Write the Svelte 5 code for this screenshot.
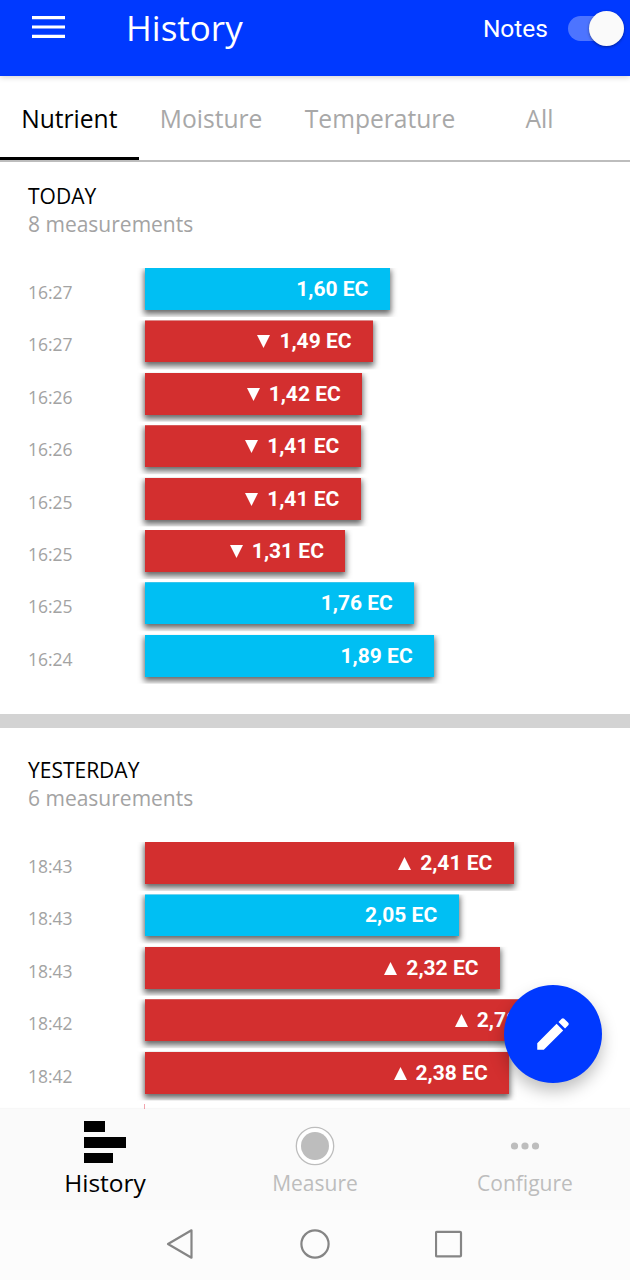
<script lang="ts">
	type Level = 'ok' | 'low' | 'high';

	interface Measurement {
		time: string;
		ec: number;
		level: Level;
	}

	interface Day {
		title: string;
		total: number;
		items: Measurement[];
	}

	const tabs = ['Nutrient', 'Moisture', 'Temperature', 'All'];

	// Bar width in pixels for 1 EC
	const scale = 153;

	const days: Day[] = [
		{
			title: 'TODAY',
			total: 8,
			items: [
				{ time: '16:27', ec: 1.6, level: 'ok' },
				{ time: '16:27', ec: 1.49, level: 'low' },
				{ time: '16:26', ec: 1.42, level: 'low' },
				{ time: '16:26', ec: 1.41, level: 'low' },
				{ time: '16:25', ec: 1.41, level: 'low' },
				{ time: '16:25', ec: 1.31, level: 'low' },
				{ time: '16:25', ec: 1.76, level: 'ok' },
				{ time: '16:24', ec: 1.89, level: 'ok' }
			]
		},
		{
			title: 'YESTERDAY',
			total: 6,
			items: [
				{ time: '18:43', ec: 2.41, level: 'high' },
				{ time: '18:43', ec: 2.05, level: 'ok' },
				{ time: '18:43', ec: 2.32, level: 'high' },
				{ time: '18:42', ec: 2.78, level: 'high' },
				{ time: '18:42', ec: 2.38, level: 'high' }
			]
		}
	];

	let activeTab = $state('Nutrient');
	let notes = $state(true);

	function format(ec: number) {
		return ec.toFixed(2).replace('.', ',') + ' EC';
	}
</script>

<div class="screen">
	<header>
		<button class="menu" aria-label="Menu">
			<svg width="33" height="23" viewBox="0 0 33 23">
				<path d="M0 1.6h33M0 11h33M0 20.4h33" stroke="#fff" stroke-width="3.2" />
			</svg>
		</button>
		<h1>History</h1>
		<span class="notes">Notes</span>
		<button class="switch" class:on={notes} aria-label="Notes" onclick={() => (notes = !notes)}>
			<span class="thumb"></span>
		</button>
	</header>

	<nav class="tabs">
		{#each tabs as tab}
			<button class="tab" class:active={activeTab === tab} onclick={() => (activeTab = tab)}>
				{tab}
			</button>
		{/each}
	</nav>

	<main>
		{#each days as day}
			<section>
				<h2>{day.title}</h2>
				<p>{day.total} measurements</p>
				<div class="rows">
					{#each day.items as item}
						<div class="row">
							<span class="time">{item.time}</span>
							<div class="bar {item.level}" style="width: {item.ec * scale}px">
								{#if item.level !== 'ok'}
									<svg class="arrow" width="13" height="13" viewBox="0 0 13 13">
										<path d={item.level === 'low' ? 'M0 0h13L6.5 13z' : 'M0 13h13L6.5 0z'} fill="#fff" />
									</svg>
								{/if}
								<span>{format(item.ec)}</span>
							</div>
						</div>
					{/each}
					{#if day.total > day.items.length}
						<div class="next"></div>
					{/if}
				</div>
			</section>
		{/each}
	</main>

	<button class="fab" aria-label="Add note">
		<svg width="42" height="42" viewBox="0 0 24 24">
			<path
				d="M3 17.25V21h3.75L17.81 9.94l-3.75-3.75L3 17.25zM20.71 7.04a1 1 0 0 0 0-1.41l-2.34-2.34a1 1 0 0 0-1.41 0l-1.83 1.83 3.75 3.75 1.83-1.83z"
				fill="#fff"
			/>
		</svg>
	</button>

	<nav class="bottom">
		<div class="item active">
			<svg width="42" height="42" viewBox="0 0 42 42">
				<path d="M0 0h21v11H0zM0 16h42v11H0zM0 32h29v10H0z" />
			</svg>
			<span>History</span>
		</div>
		<div class="item">
			<svg width="42" height="42" viewBox="0 0 42 42">
				<circle cx="21" cy="21" r="18.7" fill="#fff" stroke="#bdbdbd" stroke-width="1.3" />
				<circle cx="21" cy="21" r="14" fill="#bdbdbd" />
			</svg>
			<span>Measure</span>
		</div>
		<div class="item">
			<svg width="42" height="42" viewBox="0 0 42 42" fill="#bdbdbd">
				<circle cx="10.5" cy="21" r="3.6" />
				<circle cx="21" cy="21" r="3.6" />
				<circle cx="31.5" cy="21" r="3.6" />
			</svg>
			<span>Configure</span>
		</div>
	</nav>

	<div class="system">
		<svg width="30" height="32" viewBox="0 0 30 32">
			<path d="M3 16 26.5 2.3v27.4z" />
		</svg>
		<svg width="32" height="32" viewBox="0 0 32 32">
			<circle cx="16" cy="16" r="13.6" />
		</svg>
		<svg width="30" height="32" viewBox="0 0 30 32">
			<rect x="1" y="3.8" width="25" height="24.6" rx="1" />
		</svg>
	</div>
</div>

<style>
	:global(body) {
		margin: 0;
	}

	.screen {
		position: relative;
		display: flex;
		flex-direction: column;
		width: 630px;
		height: 1280px;
		overflow: hidden;
		background: #fff;
		font-family: 'Open Sans', 'Noto Sans', sans-serif;
		font-weight: 370;
		color: #000;
	}

	button {
		padding: 0;
		border: 0;
		background: none;
		font: inherit;
		color: inherit;
	}

	header {
		position: relative;
		display: flex;
		flex: none;
		align-items: center;
		box-sizing: border-box;
		height: 76px;
		padding: 0 6px 20px 32px;
		background: #0039ff;
		color: #fff;
		box-shadow: 0 1px 6px rgba(0, 0, 0, 0.2);
	}

	.menu {
		display: flex;
		margin: 0 61px 1px 0;
	}

	h1 {
		flex: 1;
		margin: 0;
		font-size: 35px;
		font-weight: inherit;
		line-height: 56px;
	}

	.notes {
		margin-right: 20px;
		font-family: Roboto, sans-serif;
		font-size: 24.5px;
		font-weight: 400;
	}

	.switch {
		display: flex;
		align-items: center;
		width: 56px;
		height: 25px;
		border-radius: 13px;
		background: rgba(255, 255, 255, 0.3);
	}

	.switch.on {
		justify-content: flex-end;
	}

	.thumb {
		width: 35px;
		height: 35px;
		border-radius: 50%;
		background: #fafafa;
		box-shadow: 0 1px 3px rgba(0, 0, 0, 0.4);
	}

	.tabs {
		display: flex;
		flex: none;
		box-sizing: border-box;
		height: 86px;
		border-bottom: 2px solid #bdbdbd;
	}

	.tab {
		box-sizing: border-box;
		min-width: 126px;
		height: 84px;
		padding: 3px 21.2px 0;
		border-bottom: 3px solid transparent;
		font-size: 24.6px;
		color: #a8a8a8;
	}

	.tab.active {
		border-color: #000;
		color: #000;
	}

	main {
		flex: 1;
		min-height: 0;
		overflow: hidden;
	}

	section {
		box-sizing: border-box;
		height: 566px;
		padding: 28px 28px 0;
	}

	section:first-child {
		padding-top: 20px;
		border-bottom: 14px solid #d3d3d3;
	}

	h2 {
		margin: 0;
		font-size: 21px;
		font-weight: inherit;
		line-height: 28px;
	}

	p {
		margin: 0;
		font-size: 21px;
		line-height: 28px;
		color: #a3a3a3;
	}

	.rows {
		padding-top: 30px;
	}

	.row {
		display: flex;
		align-items: flex-start;
		height: 52.4px;
	}

	.time {
		width: 117px;
		padding-top: 3px;
		font-size: 17.5px;
		line-height: 43px;
		color: #a3a3a3;
	}

	/* The shadow is cut off at the cell's own edges */
	.bar {
		display: flex;
		flex: none;
		align-items: center;
		justify-content: flex-end;
		gap: 9px;
		box-sizing: border-box;
		height: 42px;
		padding-right: 21.5px;
		background: #d32f2f;
		box-shadow: 0 3px 6px 1px rgba(0, 0, 0, 0.6);
		clip-path: inset(0 -8px -7px -8px);
		font-family: Roboto, sans-serif;
		font-size: 21px;
		font-weight: 700;
		color: #fff;
	}

	.bar.ok {
		background: #00bff3;
	}

	.arrow {
		margin-top: 1px;
	}

	.next {
		width: 1px;
		height: 42px;
		margin-left: 116px;
		background: #f3a5ae;
	}

	.fab {
		position: absolute;
		right: 28px;
		bottom: 197px;
		display: flex;
		align-items: center;
		justify-content: center;
		width: 98px;
		height: 98px;
		border-radius: 50%;
		background: #0039ff;
		box-shadow: 0 8px 16px rgba(0, 0, 0, 0.25);
	}

	.bottom {
		position: relative;
		display: flex;
		flex: none;
		height: 101px;
		background: #fafafa;
		box-shadow: 0 -1px 1px rgba(0, 0, 0, 0.03);
	}

	.item {
		display: flex;
		flex: 1;
		flex-direction: column;
		align-items: center;
		padding-top: 16px;
		font-size: 21px;
		line-height: 32px;
		color: #bdbdbd;
	}

	.item.active {
		padding-top: 12px;
		font-size: 24.5px;
		line-height: 40px;
		color: #000;
	}

	.system {
		display: flex;
		flex: none;
		align-items: center;
		justify-content: center;
		gap: 104px;
		box-sizing: border-box;
		height: 70px;
		padding-bottom: 2px;
		background: #fcfcfc;
	}

	.system svg {
		fill: none;
		stroke: #858585;
		stroke-width: 2.2;
		stroke-linejoin: round;
	}
</style>
